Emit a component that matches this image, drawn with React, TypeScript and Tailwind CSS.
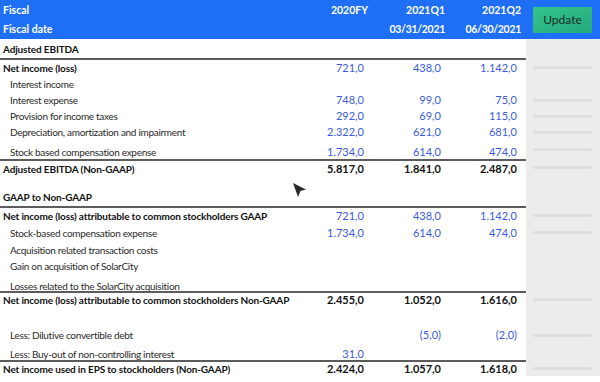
type Row = {
  label: string;
  bold?: boolean;
  total?: boolean;
  values?: string[];
  h: number;
  pt?: number;
  line?: boolean;
  bar?: boolean;
  blank?: boolean;
};

const rows: Row[] = [
  { label: "Adjusted EBITDA", bold: true, h: 19 },
  { label: "Net income (loss)", bold: true, values: ["721,0", "438,0", "1.142,0"], h: 18, line: true, bar: true },
  { label: "Interest income", h: 16 },
  { label: "Interest expense", values: ["748,0", "99,0", "75,0"], h: 16, bar: true },
  { label: "Provision for income taxes", values: ["292,0", "69,0", "115,0"], h: 16, bar: true },
  { label: "Depreciation, amortization and impairment", values: ["2.322,0", "621,0", "681,0"], h: 16, bar: true },
  { label: "Stock based compensation expense", values: ["1.734,0", "614,0", "474,0"], h: 19, pt: 5, bar: true },
  { label: "Adjusted EBITDA (Non-GAAP)", bold: true, total: true, values: ["5.817,0", "1.841,0", "2.487,0"], h: 17, line: true, bar: true },
  { label: "", blank: true, h: 12 },
  { label: "GAAP to Non-GAAP", bold: true, h: 18 },
  { label: "Net income (loss) attributable to common stockholders GAAP", bold: true, values: ["721,0", "438,0", "1.142,0"], h: 18, line: true, bar: true },
  { label: "Stock-based compensation expense", values: ["1.734,0", "614,0", "474,0"], h: 17, bar: true },
  { label: "Acquisition related transaction costs", h: 17 },
  { label: "Gain on acquisition of SolarCity", h: 16 },
  { label: "Losses related to the SolarCity acquisition", h: 17, pt: 6 },
  { label: "Net income (loss) attributable to common stockholders Non-GAAP", bold: true, total: true, values: ["2.455,0", "1.052,0", "1.616,0"], h: 16, line: true, bar: true },
  { label: "", blank: true, h: 19 },
  { label: "Less: Dilutive convertible debt", values: ["", "(5,0)", "(2,0)"], h: 18, bar: true },
  { label: "Less: Buy-out of non-controlling interest", values: ["31,0", "", ""], h: 16, pt: 3 },
  { label: "Net income used in EPS to stockholders (Non-GAAP)", bold: true, total: true, values: ["2.424,0", "1.057,0", "1.618,0"], h: 16, line: true, bar: true },
];

const colW = ["w-[78px]", "w-[77px]", "w-[76px]"];

function TableRow({ row }: { row: Row }) {
  const valueColor = row.total ? "text-[#111] font-bold" : "text-[#3b5bdb]";
  return (
    <div className="flex" style={{ height: row.h }}>
      <div
        className={`flex w-[526px] items-center ${row.line ? "border-t-2 border-[#5c5c5c]" : ""}`}
        style={{ paddingTop: row.pt ?? 0 }}
      >
        <div
          className={`min-w-0 flex-1 whitespace-nowrap text-[10px] ${
            row.bold ? "pl-[3px] font-bold tracking-[-0.15px] text-[#111]" : "pl-[10px] tracking-[-0.3px] text-[#2a2a2a]"
          }`}
        >
          {row.label}
        </div>
        {!row.blank &&
          colW.map((w, i) => (
            <div key={i} className={`${w} shrink-0 pr-1 text-right ${valueColor}`}>
              {row.values?.[i] ?? ""}
            </div>
          ))}
        <div className="w-[5px] shrink-0" />
      </div>
      <div className="flex w-[74px] items-center bg-[#ececec] pl-[7px] pr-2">
        {row.bar && <div className="h-[3px] w-full rounded-full bg-[#dfdfdf]" />}
      </div>
    </div>
  );
}

export default function App() {
  return (
    <div className="relative h-[382px] w-[600px] overflow-hidden bg-white font-['Lato',sans-serif] text-[11px] leading-[14px]">
      {/* header */}
      <div className="flex h-[39px] bg-[#1e6ff6] font-bold text-white">
        <div className="w-[526px] text-[10.5px]">
          <div className="flex h-[19px] items-center">
            <div className="flex-1 pl-[3px]">Fiscal</div>
            <div className="w-[78px] text-right">2020FY</div>
            <div className="w-[77px] text-right">2021Q1</div>
            <div className="w-[76px] text-right">2021Q2</div>
            <div className="w-[5px]" />
          </div>
          <div className="flex h-[20px] items-center">
            <div className="flex-1 pl-[3px]">Fiscal date</div>
            <div className="w-[78px]" />
            <div className="w-[77px] text-right tracking-[-0.3px]">03/31/2021</div>
            <div className="w-[76px] text-right tracking-[-0.3px]">06/30/2021</div>
            <div className="w-[5px]" />
          </div>
        </div>
        <div className="flex w-[74px] items-center pl-[7px] pr-2">
          <button className="h-[26px] w-full bg-gradient-to-br from-[#33c58c] to-[#24a97c] text-[12px] font-normal text-[#1b2b27]">
            Update
          </button>
        </div>
      </div>

      {/* body */}
      <div className="flex flex-col">
        {rows.map((r, i) => (
          <TableRow key={i} row={r} />
        ))}
      </div>

      {/* mouse cursor */}
      <svg className="absolute left-[292px] top-[182px]" width="16" height="17" viewBox="0 0 16 17">
        <path d="M1 1 L14 7.5 L8.5 9 L6 15 Z" fill="#2b2b2b" />
      </svg>
    </div>
  );
}
